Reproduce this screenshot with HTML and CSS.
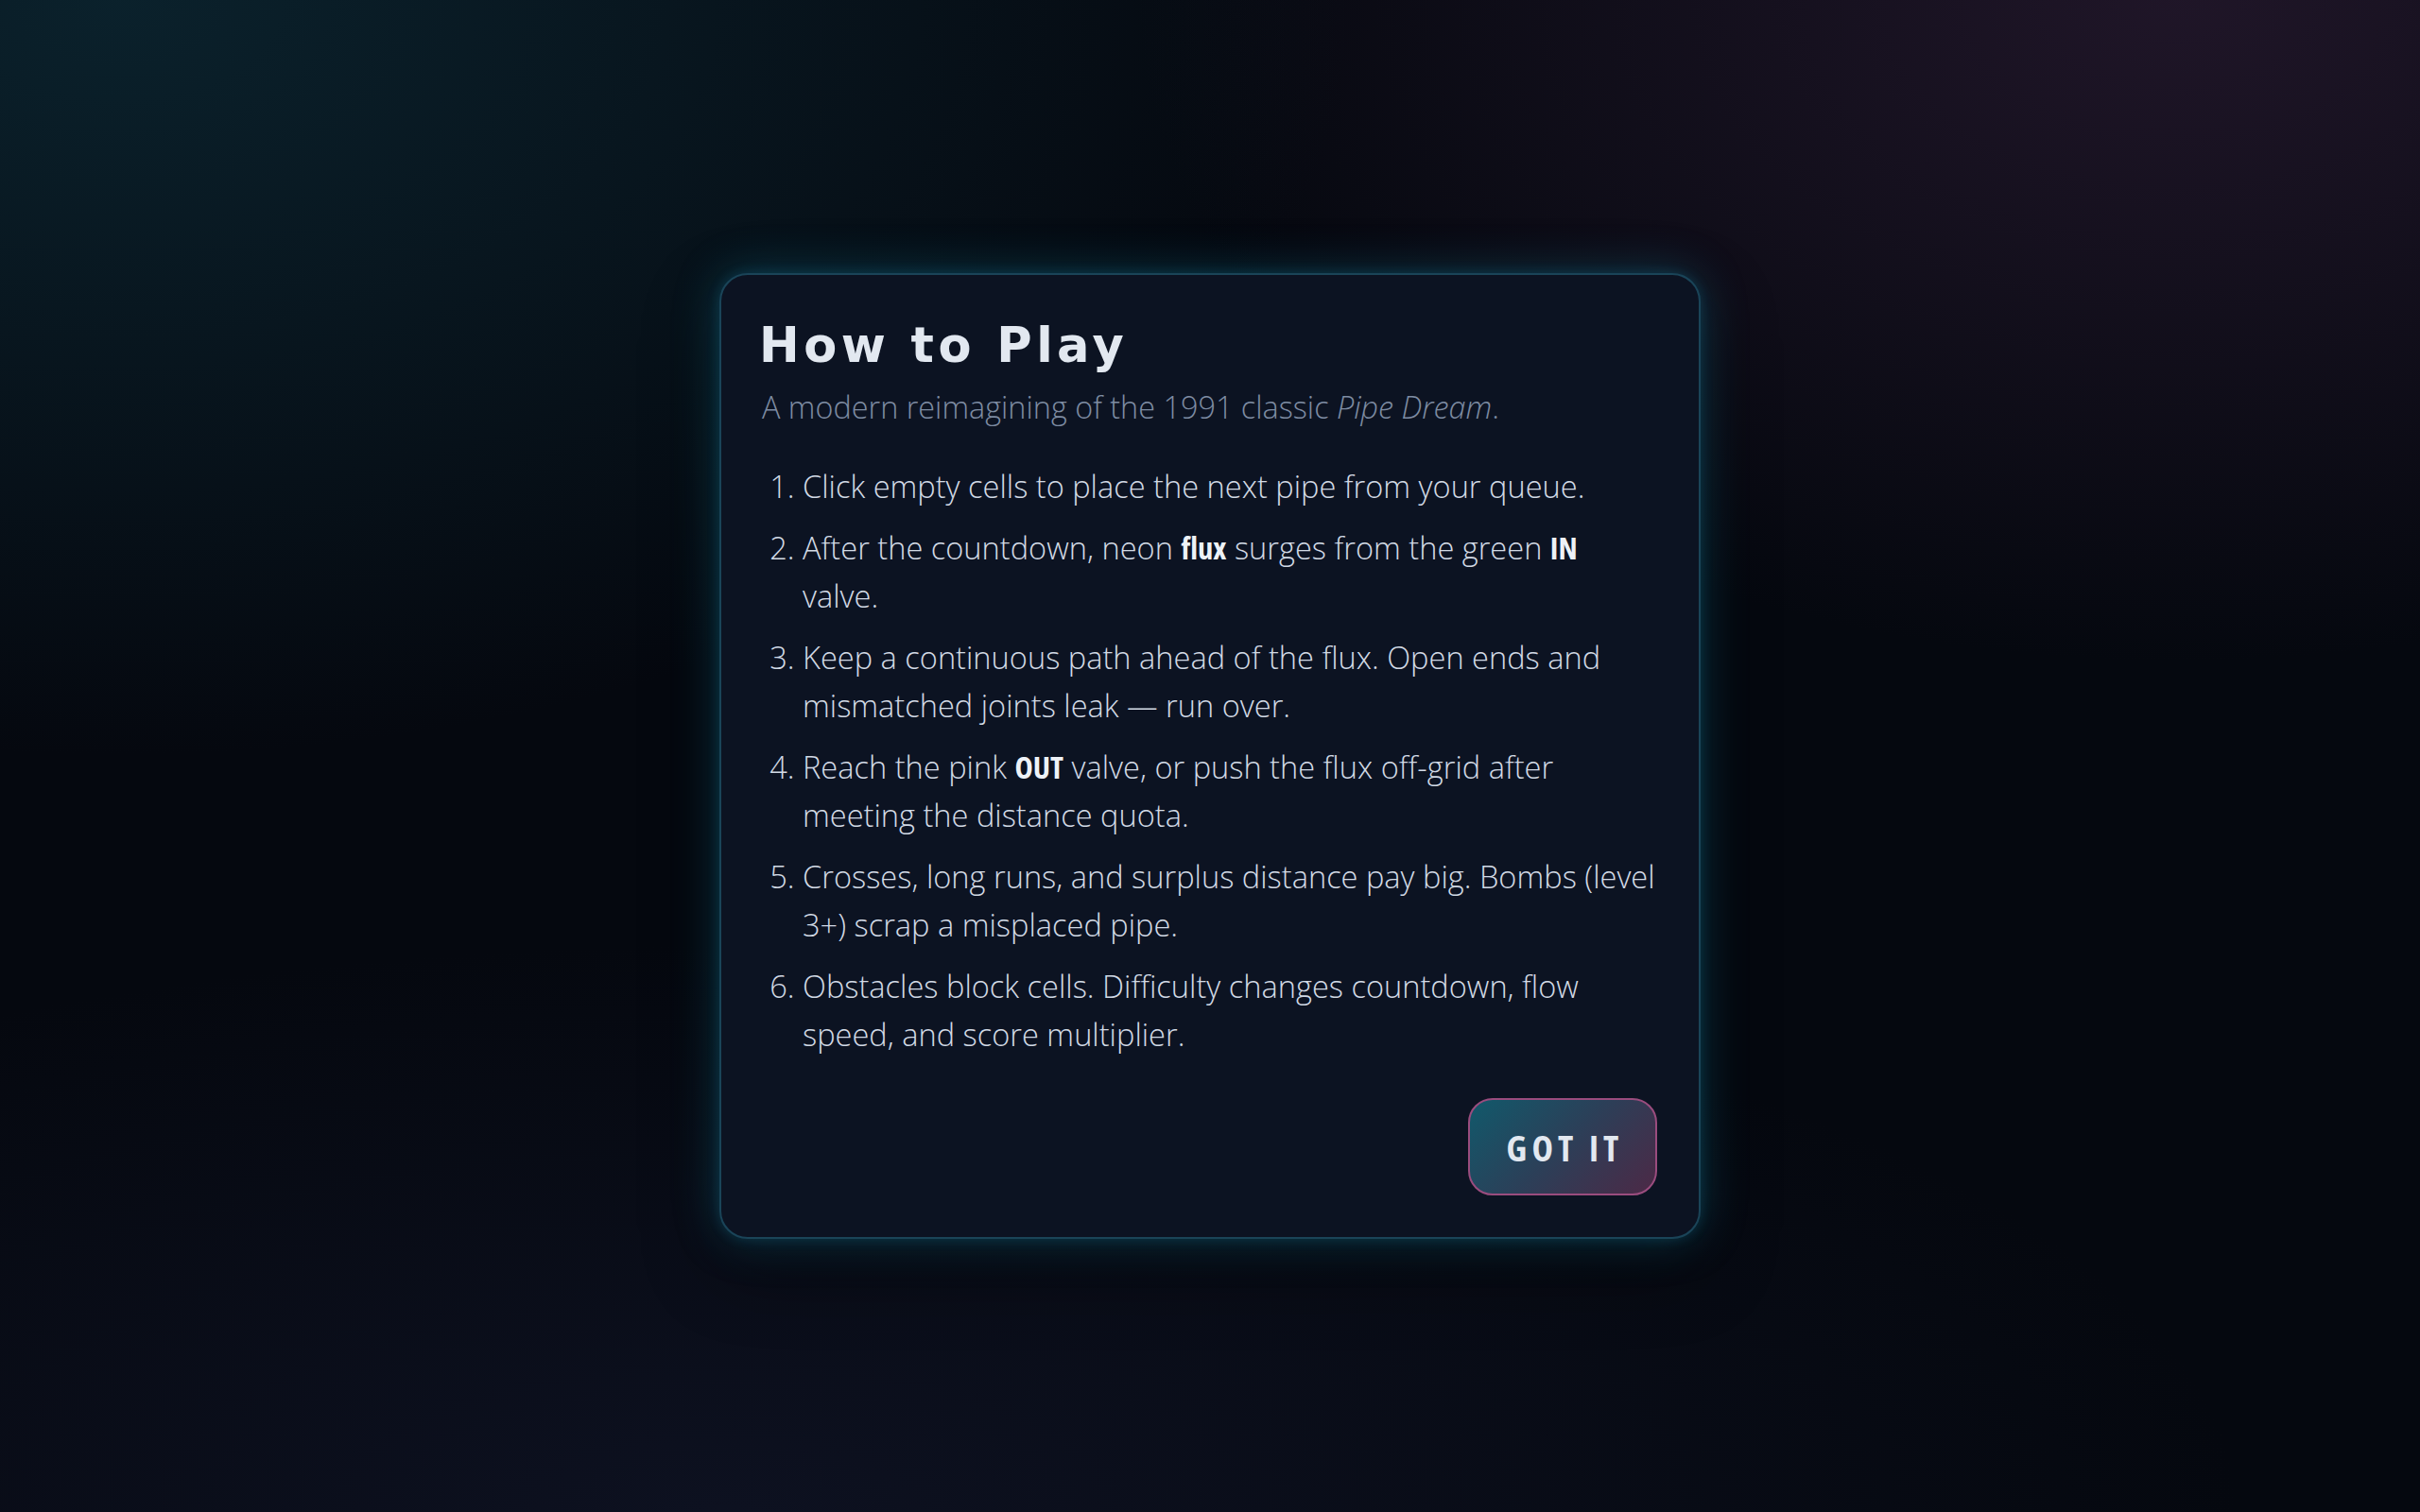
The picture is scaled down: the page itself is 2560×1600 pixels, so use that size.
FILE: index.html
```html
<!DOCTYPE html>
<html lang="en">
<head>
<meta charset="utf-8">
<title>How to Play</title>
<link rel="stylesheet" href="styles.css">
</head>
<body>
<div class="backdrop">
  <section class="dialog">
    <h1 class="dialog-title">How to Play</h1>
    <p class="dialog-sub">A modern reimagining of the 1991 classic <em>Pipe Dream</em>.</p>
    <ol class="steps">
      <li>Click empty cells to place the next pipe from your queue.</li>
      <li>After the countdown, neon <strong>flux</strong> surges from the green <strong>IN</strong> valve.</li>
      <li>Keep a continuous path ahead of the flux. Open ends and mismatched joints leak — run over.</li>
      <li>Reach the pink <strong>OUT</strong> valve, or push the flux off-grid after meeting the distance quota.</li>
      <li>Crosses, long runs, and surplus distance pay big. Bombs (level 3+) scrap a misplaced pipe.</li>
      <li>Obstacles block cells. Difficulty changes countdown, flow speed, and score multiplier.</li>
    </ol>
    <div class="actions">
      <button class="btn-primary" type="button">GOT IT</button>
    </div>
  </section>
</div>
</body>
</html>
```
FILE: styles.css
```css
html, body {
  margin: 0;
  padding: 0;
  height: 100%;
}

body {
  background-color: #05080f;
  background-image:
    radial-gradient(ellipse 1300px 800px at 5% 0%, rgba(13, 44, 56, 0.7), rgba(13, 44, 56, 0) 100%),
    radial-gradient(ellipse 1100px 700px at 90% 0%, rgba(38, 25, 46, 0.8), rgba(38, 25, 46, 0) 100%),
    radial-gradient(ellipse 1600px 600px at 30% 100%, rgba(14, 18, 34, 0.9), rgba(14, 18, 34, 0) 100%);
  color: #cfd8e3;
  font-family: "Open Sans", "Liberation Sans", sans-serif;
}

.backdrop {
  min-height: 100vh;
  display: flex;
  align-items: center;
  justify-content: center;
}

.dialog {
  box-sizing: border-box;
  width: 1038px;
  padding: 45px 44px 44px 43px;
  background: #0c1322;
  border: 2px solid #1a4458;
  border-radius: 30px;
  box-shadow:
    0 0 50px rgba(28, 160, 200, 0.3),
    0 0 14px rgba(28, 150, 190, 0.2),
    0 30px 80px rgba(0, 0, 0, 0.45);
}

.dialog-title {
  margin: 0 0 0 -3px;
  font-family: "DejaVu Sans", "Liberation Sans", sans-serif;
  font-weight: 700;
  font-size: 51px;
  line-height: 60px;
  letter-spacing: 4.5px;
  color: #e2e8f0;
}

.dialog-sub {
  margin: 12px 0 0;
  font-weight: 300;
  font-size: 32.4px;
  line-height: 45.6px;
  color: #7e8ca2;
}

.dialog-sub em {
  font-style: italic;
}

.steps {
  margin: 36px 0 0;
  padding: 0 0 0 43px;
  font-weight: 300;
  font-size: 32.6px;
  line-height: 51px;
  color: #d2dae5;
}

.steps li {
  margin: 0 0 14px;
}

.steps li:last-child {
  margin-bottom: 0;
}

.steps strong {
  font-weight: 700;
  font-stretch: 87.5%;
  color: #eef2f7;
}

.actions {
  margin-top: 42px;
  display: flex;
  justify-content: flex-end;
}

.btn-primary {
  box-sizing: border-box;
  width: 200px;
  height: 103px;
  padding: 0 0 0 5px;
  border: 2px solid #9a4c7e;
  border-radius: 26px;
  background: linear-gradient(135deg, #11596b 0%, #2c3f58 50%, #4c2946 100%);
  color: #e2e8f0;
  font-family: "Open Sans", "Liberation Sans", sans-serif;
  font-stretch: 75%;
  font-weight: 700;
  font-size: 38px;
  letter-spacing: 5px;
  cursor: pointer;
}
```
